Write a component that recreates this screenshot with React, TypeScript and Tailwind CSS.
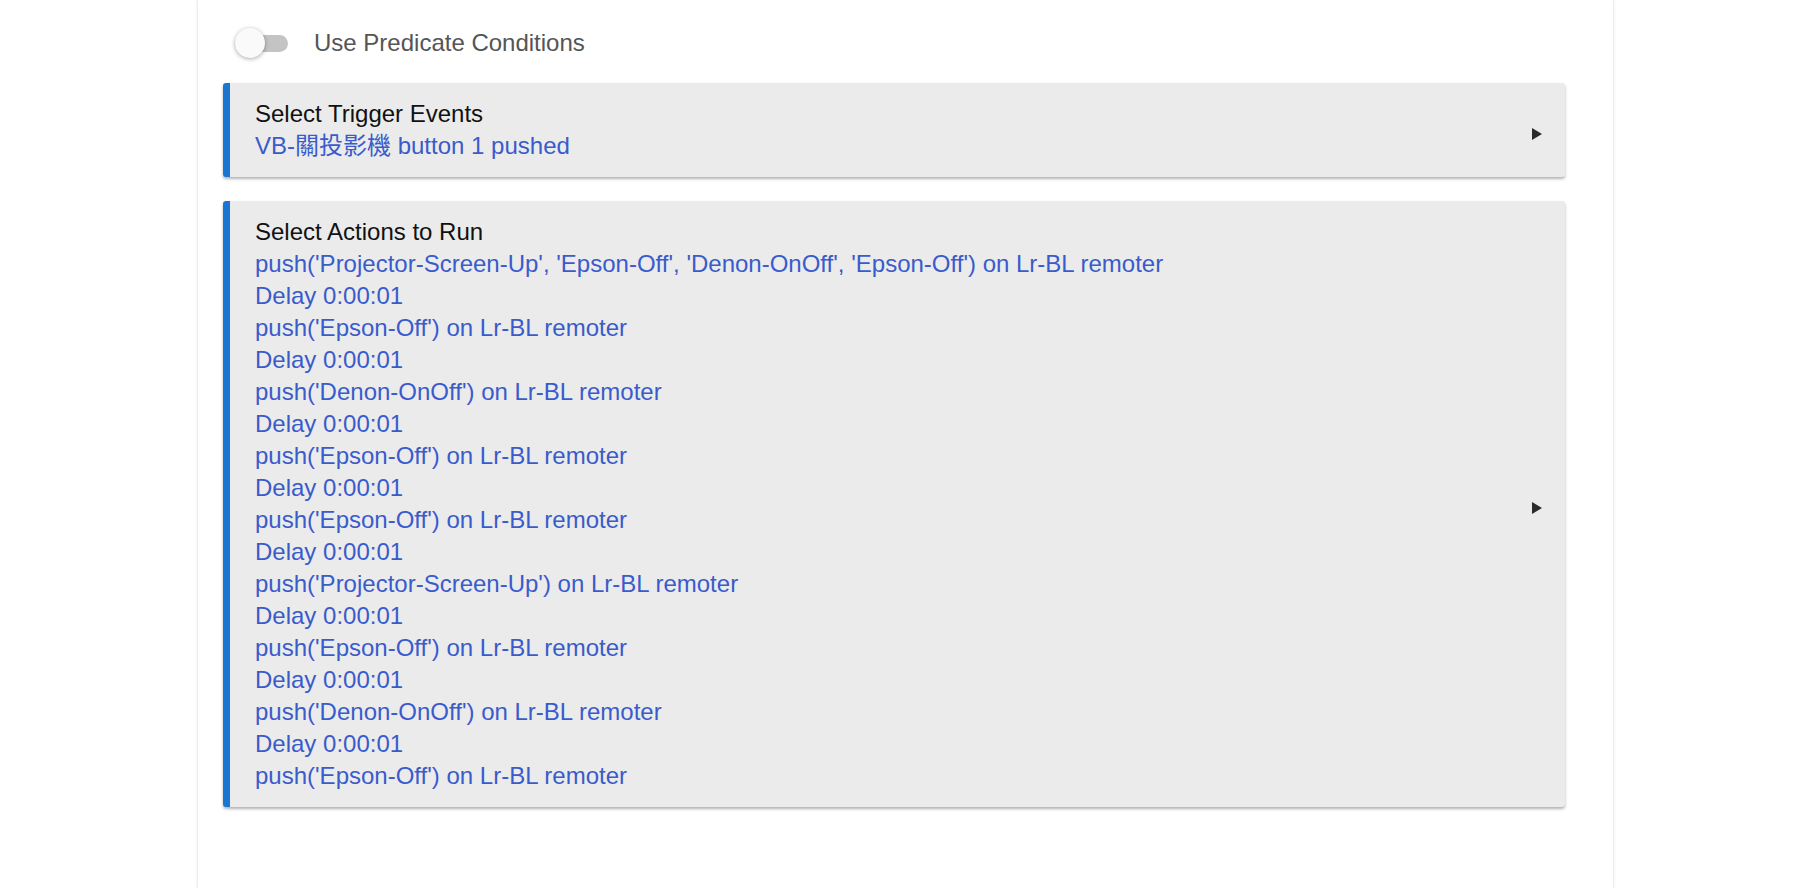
const actions = [
  "push('Projector-Screen-Up', 'Epson-Off', 'Denon-OnOff', 'Epson-Off') on Lr-BL remoter",
  "Delay 0:00:01",
  "push('Epson-Off') on Lr-BL remoter",
  "Delay 0:00:01",
  "push('Denon-OnOff') on Lr-BL remoter",
  "Delay 0:00:01",
  "push('Epson-Off') on Lr-BL remoter",
  "Delay 0:00:01",
  "push('Epson-Off') on Lr-BL remoter",
  "Delay 0:00:01",
  "push('Projector-Screen-Up') on Lr-BL remoter",
  "Delay 0:00:01",
  "push('Epson-Off') on Lr-BL remoter",
  "Delay 0:00:01",
  "push('Denon-OnOff') on Lr-BL remoter",
  "Delay 0:00:01",
  "push('Epson-Off') on Lr-BL remoter",
];

function Arrow() {
  return (
    <svg width="12" height="14" viewBox="0 0 12 14" className="shrink-0 translate-y-[4px]">
      <path d="M1 1 L11 7 L1 13 Z" fill="#2b2b2b" />
    </svg>
  );
}

function Section({ title, lines }: { title: string; lines: string[] }) {
  return (
    <div className="flex items-center rounded-[3px] border-l-[7px] border-[#1976d2] bg-[#ebebeb] py-[15px] pl-[25px] pr-[22px] shadow-[0_2px_3px_rgba(0,0,0,0.3)]">
      <div className="flex-1 text-[24px] leading-[32px]">
        <div className="text-[#111]">{title}</div>
        {lines.map((l, i) => (
          <div key={i} className="text-[#3a5bcc]">
            {l}
          </div>
        ))}
      </div>
      <Arrow />
    </div>
  );
}

export default function App() {
  return (
    <div className="min-h-[888px] bg-white font-['Liberation_Sans','Noto_Sans_CJK_TC',sans-serif]">
      <div className="ml-[198px] mr-[203px] min-h-[888px] shadow-[0_0_3px_rgba(0,0,0,0.18)] px-[25px]">
        <div className="flex h-[83px] items-center pt-[3px] pl-[12px]">
          <div className="relative h-[17px] w-[53px] rounded-full bg-[#c4c4c4]">
            <div className="absolute left-0 top-[-7px] h-[30px] w-[30px] rounded-full bg-[#fafafa] shadow-[0_1px_4px_rgba(0,0,0,0.35)]" />
          </div>
          <span className="ml-[26px] text-[24px] text-[#555]">Use Predicate Conditions</span>
        </div>
        <div className="flex w-[1342px] flex-col gap-[24px]">
          <Section title="Select Trigger Events" lines={["VB-關投影機 button 1 pushed"]} />
          <Section title="Select Actions to Run" lines={actions} />
        </div>
      </div>
    </div>
  );
}
